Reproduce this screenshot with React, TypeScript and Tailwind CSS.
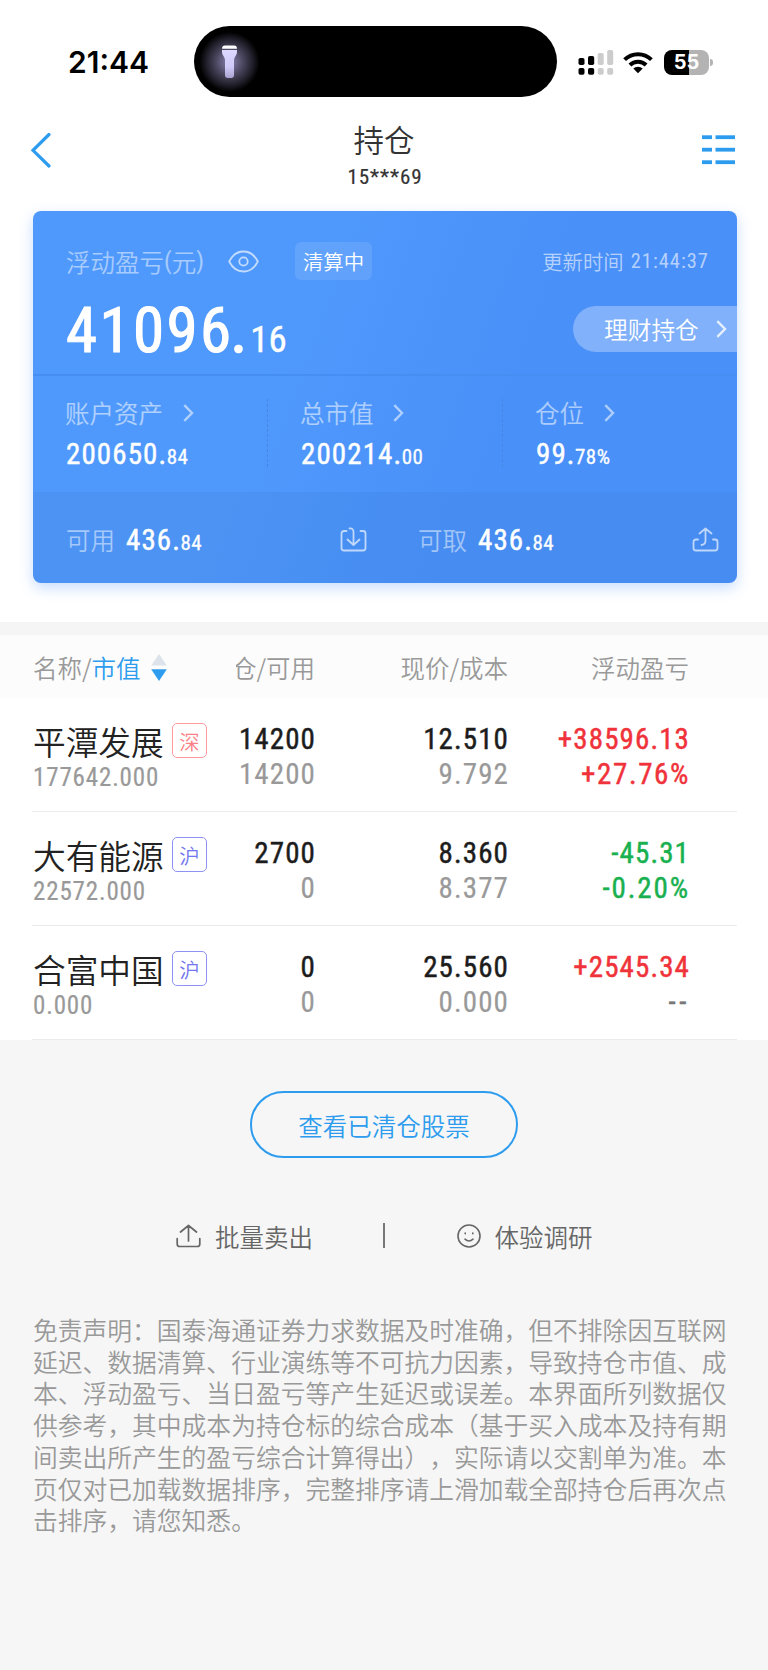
import type { ReactNode } from "react";

const NUM = "font-['Roboto_Condensed',Roboto,sans-serif] font-normal";
const SEMI = "[-webkit-text-stroke:0.45px_currentColor]";
const SLIM = "[-webkit-text-stroke:0.2px_currentColor]";

function Chevron({ className = "" }: { className?: string }) {
  return (
    <svg className={`h-[18px] w-[11px] ${className}`} viewBox="0 0 11 18" fill="none" stroke="currentColor" strokeWidth="2.4">
      <path d="M1.3 1.2 9 9l-7.7 7.8" />
    </svg>
  );
}

function Amount({ whole, part }: { whole: string; part: string }) {
  return (
    <span className={`${NUM} flex items-baseline leading-[30px] text-white`}>
      <span className={`text-[29px] tracking-[1.100px] ${SEMI}`}>{whole}</span>
      <span className="-ml-[0.500px] text-[21px] tracking-[0.400px] [-webkit-text-stroke:0.3px_currentColor]">{part}</span>
    </span>
  );
}

function StatusBar() {
  return (
    <div className="flex h-[123px] items-start pt-[26px]">
      <div className="mt-[17px] w-[126px] ml-[68px] font-['Inter',sans-serif] text-[30px] font-semibold leading-[38px] text-black">
        21:44
      </div>
      <div className="flex h-[71px] w-[363px] items-center rounded-[35.5px] bg-black">
        <svg className="h-[71px] w-[71px]" viewBox="0 0 71 71">
          <defs>
            <radialGradient id="glow">
              <stop offset="0" stopColor="#8d86b4" />
              <stop offset="0.45" stopColor="#4b475f" />
              <stop offset="0.75" stopColor="#24222e" />
              <stop offset="1" stopColor="#000" />
            </radialGradient>
            <linearGradient id="torch" x1="0" y1="0" x2="0" y2="1">
              <stop offset="0" stopColor="#dcd8ff" />
              <stop offset="0.6" stopColor="#cfcaf8" />
              <stop offset="1" stopColor="#a9a4cf" />
            </linearGradient>
          </defs>
          <circle cx="35.5" cy="36" r="30" fill="url(#glow)" />
          <path d="M28 22.8q0-3.400 3-3.400h9q3 0 3 3.400z" fill="#fff" />
          <path d="M28 24h15v2.200q0 2-1.600 4-1.400 1.800-1.400 4v15.400q0 2.400-2.400 2.400h-4.200q-2.400 0-2.400-2.400V34.200q0-2.200-1.400-4-1.600-2-1.600-4z" fill="url(#torch)" />
        </svg>
      </div>
      <div className="mt-[24px] ml-[21px] flex items-start">
        <svg className="h-[25px] w-[36px]" viewBox="0 0 36 25">
          <g fill="#000">
            <rect x="0.500" y="8" width="6" height="7" rx="1.800" />
            <rect x="0.500" y="18" width="6" height="6.800" rx="1.800" />
            <rect x="10" y="6" width="6.200" height="9" rx="1.800" />
            <rect x="10" y="18" width="6.200" height="6.800" rx="1.800" />
          </g>
          <g fill="#cccccc">
            <rect x="19.700" y="3" width="6" height="12" rx="1.800" />
            <rect x="19.700" y="18" width="6" height="6.800" rx="1.800" />
            <rect x="29.200" y="0" width="6" height="15" rx="1.800" />
            <rect x="29.200" y="18" width="6" height="6.800" rx="1.800" />
          </g>
        </svg>
        <svg className="mt-[1px] ml-[9px] h-[23px] w-[30px]" viewBox="0 0 30 23" fill="none" stroke="#000" strokeWidth="4">
          <path d="M1.600 8.600a19.200 19.200 0 0 1 26.800 0" />
          <path d="M6.900 14a11.700 11.700 0 0 1 16.200 0" />
          <path d="M15 22.300 10.300 17.600a6.800 6.800 0 0 1 9.400 0z" fill="#000" stroke="none" />
        </svg>
        <div className="ml-[11px] flex h-[25px] w-[45px] items-center justify-center rounded-[8px] bg-linear-to-r from-black from-55% to-[#b3b3b3] to-55% font-['Inter',sans-serif] text-[20px] font-bold leading-[25px] text-white">
          55
        </div>
        <div className="ml-[1px] mt-[9px] h-[7px] w-[3px] rounded-r-[3px] bg-[#b3b3b3]" />
      </div>
    </div>
  );
}

function NavBar() {
  return (
    <div className="flex h-[88px] justify-between pl-[30px] pr-[33px] text-[#2d9cee]">
      <svg className="mt-[9px] h-[36px] w-[22px]" viewBox="0 0 22 36" fill="none" stroke="currentColor" strokeWidth="3.200" strokeLinecap="round">
        <path d="M19 2.500 3 18.300 19 34" />
      </svg>
      <div className="flex flex-col items-center pl-[14px] text-[#333]">
        <div className="-mt-[1px] text-[30.500px] leading-[34px]">持仓</div>
        <div className={`${NUM} ${SLIM} mt-[9px] pl-[2px] text-[21px] leading-[24px] tracking-[0.900px]`}>15***69</div>
      </div>
      <svg className="mt-[12px] h-[30px] w-[33px]" viewBox="0 0 33 30" fill="currentColor">
        <rect x="0" y="0.300" width="10" height="3.800" />
        <rect x="13.500" y="0.300" width="19.500" height="3.800" />
        <rect x="0" y="12.800" width="10" height="3.800" />
        <rect x="13.500" y="12.800" width="19.500" height="3.800" />
        <rect x="0" y="25.300" width="10" height="3.800" />
        <rect x="13.500" y="25.300" width="19.500" height="3.800" />
      </svg>
    </div>
  );
}

function Stat({ label, whole, part, divider }: { label: string; whole: string; part: string; divider?: boolean }) {
  return (
    <div className="flex h-[68px] w-[235px] shrink-0">
      <div className="w-[201px]">
        <div className="-ml-[1px] -mt-[1px] flex h-[31px] items-center text-[24.500px] text-white/55">
          {label}
          <Chevron className="-mt-[1px] ml-[19.500px]" />
        </div>
        <div className="mt-[10px]">
          <Amount whole={whole} part={part} />
        </div>
      </div>
      {divider && <div className="h-full border-l border-dashed border-[#4587e2]" />}
    </div>
  );
}

function SummaryCard() {
  return (
    <section className="ml-[33px] mr-[31px] h-[372px] rounded-[8px] bg-linear-110 from-[#5099fc] from-35% to-[#4990f8] to-65% shadow-[0_5px_14px_rgba(73,144,248,0.300)]">
      <div className="h-[163px] pl-[33px]">
        <div className="flex h-[69px] items-center pt-[31px]">
          <div className="mt-[2px] flex w-[162px] items-center text-[24.500px] leading-[36px] text-white/50">
            浮动盈亏<span className={`${NUM} -mt-[3px]`}>(</span>元<span className={`${NUM} -mt-[3px]`}>)</span>
          </div>
          <svg className="h-[23px] w-[31px] text-white/65" viewBox="0 0 31 23" fill="none" stroke="currentColor" strokeWidth="1.800">
            <path d="M1.200 11.500C4.500 5 9.300 1.500 15.500 1.500s11 3.500 14.300 10c-3.300 6.500-8.100 10-14.300 10s-11-3.500-14.300-10z" />
            <circle cx="15.500" cy="11.500" r="4.200" />
          </svg>
          <div className="ml-[36px] flex h-[38px] w-[77px] items-center justify-center rounded-[6px] bg-white/10 text-[20.400px] text-white">清算中</div>
          <div className="ml-auto mr-[28px] mt-[1px] flex items-center text-[20.400px] text-white/60">
            更新时间
            <span className={`${NUM} ml-[7px] -mt-[1px] text-[20.500px] tracking-[1px]`}>21:44:37</span>
          </div>
        </div>
        <div className="flex justify-between">
          <div className={`${NUM} mt-[19px] flex items-baseline leading-[64px] text-white`}>
            <span className="text-[63px] tracking-[2.400px] [-webkit-text-stroke:1.1px_currentColor]">41096</span>
            <span className="-ml-[3px] text-[63px] [-webkit-text-stroke:1.6px_currentColor]">.</span>
            <span className="ml-[3px] text-[37px] [-webkit-text-stroke:0.4px_currentColor]">16</span>
          </div>
          <div className="mt-[26px] flex h-[46px] w-[164px] items-center rounded-l-[23px] bg-white/30 pl-[31px] text-[23.700px] text-white">
            <span className="mt-[2px]">理财持仓</span>
            <Chevron className="ml-[17px] text-white/80" />
          </div>
        </div>
      </div>
      <div className="flex h-[118px] border-t-2 border-[#478ef2] pl-[33px] pt-[23px]">
        <Stat label="账户资产" whole="200650." part="84" divider />
        <Stat label="总市值" whole="200214." part="00" divider />
        <Stat label="仓位" whole="99." part="78%" />
      </div>
      <div className="flex h-[91px] items-center rounded-b-[8px] bg-[#3c7dd7]/20 pl-[33px] pt-[4px] text-[24.500px] text-white/50">
        <span className="mt-[1px] w-[60px]">可用</span>
        <span className="mt-[3px]"><Amount whole="436." part="84" /></span>
        <svg className="ml-auto h-[26px] w-[27px] text-white/65" viewBox="0 0 27 26" fill="none" stroke="currentColor" strokeWidth="1.800" strokeLinecap="round" strokeLinejoin="round">
          <path d="M6.500 4H4Q1.500 4 1.500 6.500V21q0 2.500 2.500 2.500h19q2.500 0 2.500-2.500V6.500Q25.500 4 23 4h-2.500M9.500 1.500Q13.500 1 13.500 5v13M7.500 12.500l6 5.500 6-5.500" />
        </svg>
        <span className="ml-[51px] mt-[1px] w-[60px]">可取</span>
        <span className="mt-[3px] w-[214px]"><Amount whole="436." part="84" /></span>
        <svg className="mr-[18px] h-[26px] w-[27px] text-white/65" viewBox="0 0 27 26" fill="none" stroke="currentColor" strokeWidth="1.800" strokeLinecap="round" strokeLinejoin="round">
          <path d="M6 12.500H4q-2.500 0-2.500 2.500v6q0 2.500 2.500 2.500h19q2.500 0 2.500-2.500v-6q0-2.500-2.500-2.500h-2M7.500 6.500l6-5 6 5M13.500 1.500v12q0 4-4 4.500" />
        </svg>
      </div>
    </section>
  );
}

interface Holding {
  name: string;
  market: string;
  value: string;
  qty: string;
  free: string;
  price: string;
  cost: string;
  gain: string;
  rate: string;
  tag: string;
  tone: string;
  rateTone: string;
}

const RED = "text-[#f0323a]";
const GREEN = "text-[#19b050]";
const SZ = "border-[#fd9a9f] text-[#fb7f86]";
const SH = "border-[#8f92f5] text-[#7377ee]";

const holdings: Holding[] = [
  { name: "平潭发展", market: "深", value: "177642.000", qty: "14200", free: "14200", price: "12.510", cost: "9.792", gain: "+38596.13", rate: "+27.76%", tag: SZ, tone: RED, rateTone: `tracking-[1.600px] ${RED}` },
  { name: "大有能源", market: "沪", value: "22572.000", qty: "2700", free: "0", price: "8.360", cost: "8.377", gain: "-45.31", rate: "-0.20%", tag: SH, tone: GREEN, rateTone: `tracking-[1.900px] ${GREEN}` },
  { name: "合富中国", market: "沪", value: "0.000", qty: "0", free: "0", price: "25.560", cost: "0.000", gain: "+2545.34", rate: "--", tag: SH, tone: RED, rateTone: "tracking-[3.500px] text-[#777]" },
];

function Pair({ top, bottom, topTone, bottomTone }: { top: string; bottom: string; topTone: string; bottomTone: string }) {
  return (
    <div className={`${NUM} pt-[24px] text-right text-[29px] leading-[35.300px] tracking-[1.100px]`}>
      <div className={`${SEMI} ${topTone}`}>{top}</div>
      <div className={bottomTone}>{bottom}</div>
    </div>
  );
}

function HoldingsTable() {
  return (
    <section className="bg-white">
      <div className="grid h-[63px] grid-cols-[174px_108px_193px_181px] items-center bg-[#fcfcfc] px-[33px] pt-[3px] text-[24.500px] text-[#999]">
        <div className="flex items-center whitespace-nowrap">
          名称/<span className="text-[#2d9cee]">市值</span>
          <svg className="-mt-[2px] ml-[10px] h-[27px] w-[16px]" viewBox="0 0 16 27">
            <path d="M8 0l7.800 11.500H.200z" fill="#dce3ea" />
            <path d="M8 27 .200 15.300h15.600z" fill="#2d9cee" />
          </svg>
        </div>
        <div className="ml-auto flex w-[79px] justify-end overflow-hidden whitespace-nowrap">仓/可用</div>
        <div className="text-right">现价/成本</div>
        <div className="text-right">浮动盈亏</div>
      </div>
      {holdings.map((h) => (
        <div key={h.name} className="ml-[32px] mr-[31px] grid h-[114px] grid-cols-[175px_109px_193px_181px] border-b border-[#ececec]">
          <div className="pl-[1px] pt-[24px]">
            <div className="flex h-[38px] items-center justify-between">
              <span className="-mt-[1px] text-[32.700px] leading-[38px] text-[#222]">{h.name}</span>
              <span className={`-mt-[1px] flex h-[35px] w-[35px] items-center justify-center rounded-[5px] border text-[20.400px] leading-[30px] ${h.tag}`}>{h.market}</span>
            </div>
            <div className={`${NUM} ${SLIM} mt-[3px] text-[25px] leading-[30px] tracking-[0.850px] text-[#999]`}>{h.value}</div>
          </div>
          <Pair top={h.qty} bottom={h.free} topTone="text-[#1c1c1c]" bottomTone={`${SLIM} text-[#999]`} />
          <Pair top={h.price} bottom={h.cost} topTone="text-[#1c1c1c]" bottomTone={`${SLIM} text-[#999]`} />
          <Pair top={h.gain} bottom={h.rate} topTone={h.tone} bottomTone={`${SEMI} ${h.rateTone}`} />
        </div>
      ))}
    </section>
  );
}

const disclaimer = [
  "免责声明：国泰海通证券力求数据及时准确，但不排除因互联网",
  "延迟、数据清算、行业演练等不可抗力因素，导致持仓市值、成",
  "本、浮动盈亏、当日盈亏等产生延迟或误差。本界面所列数据仅",
  "供参考，其中成本为持仓标的综合成本（基于买入成本及持有期",
  "间卖出所产生的盈亏综合计算得出），实际请以交割单为准。本",
  "页仅对已加载数据排序，完整排序请上滑加载全部持仓后再次点",
  "击排序，请您知悉。",
];

function Action({ icon, label }: { icon: ReactNode; label: string }) {
  return (
    <div className="flex items-center text-[24.500px] text-[#666]">
      {icon}
      {label}
    </div>
  );
}

function Footer() {
  return (
    <footer className="flex flex-col">
      <button className="mt-[51px] flex h-[67px] w-[268px] items-center justify-center self-center rounded-[33.500px] border-2 border-[#2d9cee] pt-[3px] text-[24.500px] text-[#2d9cee]">
        查看已清仓股票
      </button>
      <div className="mt-[61px] flex h-[37px] items-center pl-[176px]">
        <Action
          label="批量卖出"
          icon={
            <svg className="-mt-[3px] mr-[14px] h-[24px] w-[25px]" viewBox="0 0 25 24" fill="none" stroke="currentColor" strokeWidth="1.700" strokeLinecap="round" strokeLinejoin="round">
              <path d="M1.200 14.500V20q0 2.500 2.500 2.500h17.600q2.500 0 2.500-2.500v-5.500M12.500 17V1.500M4.500 8l8-6.500 8 6.500" />
            </svg>
          }
        />
        <div className="-mt-[4px] ml-[70px] h-[25px] w-[1.500px] bg-[#777]" />
        <div className="ml-[72px]">
          <Action
            label="体验调研"
            icon={
              <svg className="-mt-[3px] mr-[14px] h-[24px] w-[24px]" viewBox="0 0 24 24" fill="none" stroke="currentColor" strokeWidth="1.600" strokeLinecap="round">
                <circle cx="12" cy="12" r="11" />
                <path d="M8 15.200q4 3.600 8 0" />
                <path d="M8.200 9v.800M15.800 9v.800" />
              </svg>
            }
          />
        </div>
      </div>
      <div className="mt-[58px] whitespace-nowrap pl-[33px] text-[24.780px] leading-[31.700px] text-[#999] [text-spacing-trim:space-all]">
        {disclaimer.map((line) => (
          <div key={line}>{line}</div>
        ))}
      </div>
    </footer>
  );
}

export default function App() {
  return (
    <main className="h-[1670px] w-[768px] overflow-hidden bg-[#f6f6f6] font-['Noto_Sans_CJK_SC',sans-serif] font-[350]">
      <header className="h-[622px] bg-white">
        <StatusBar />
        <NavBar />
        <SummaryCard />
      </header>
      <div className="h-[13px] bg-[#f5f5f5]" />
      <HoldingsTable />
      <Footer />
    </main>
  );
}
